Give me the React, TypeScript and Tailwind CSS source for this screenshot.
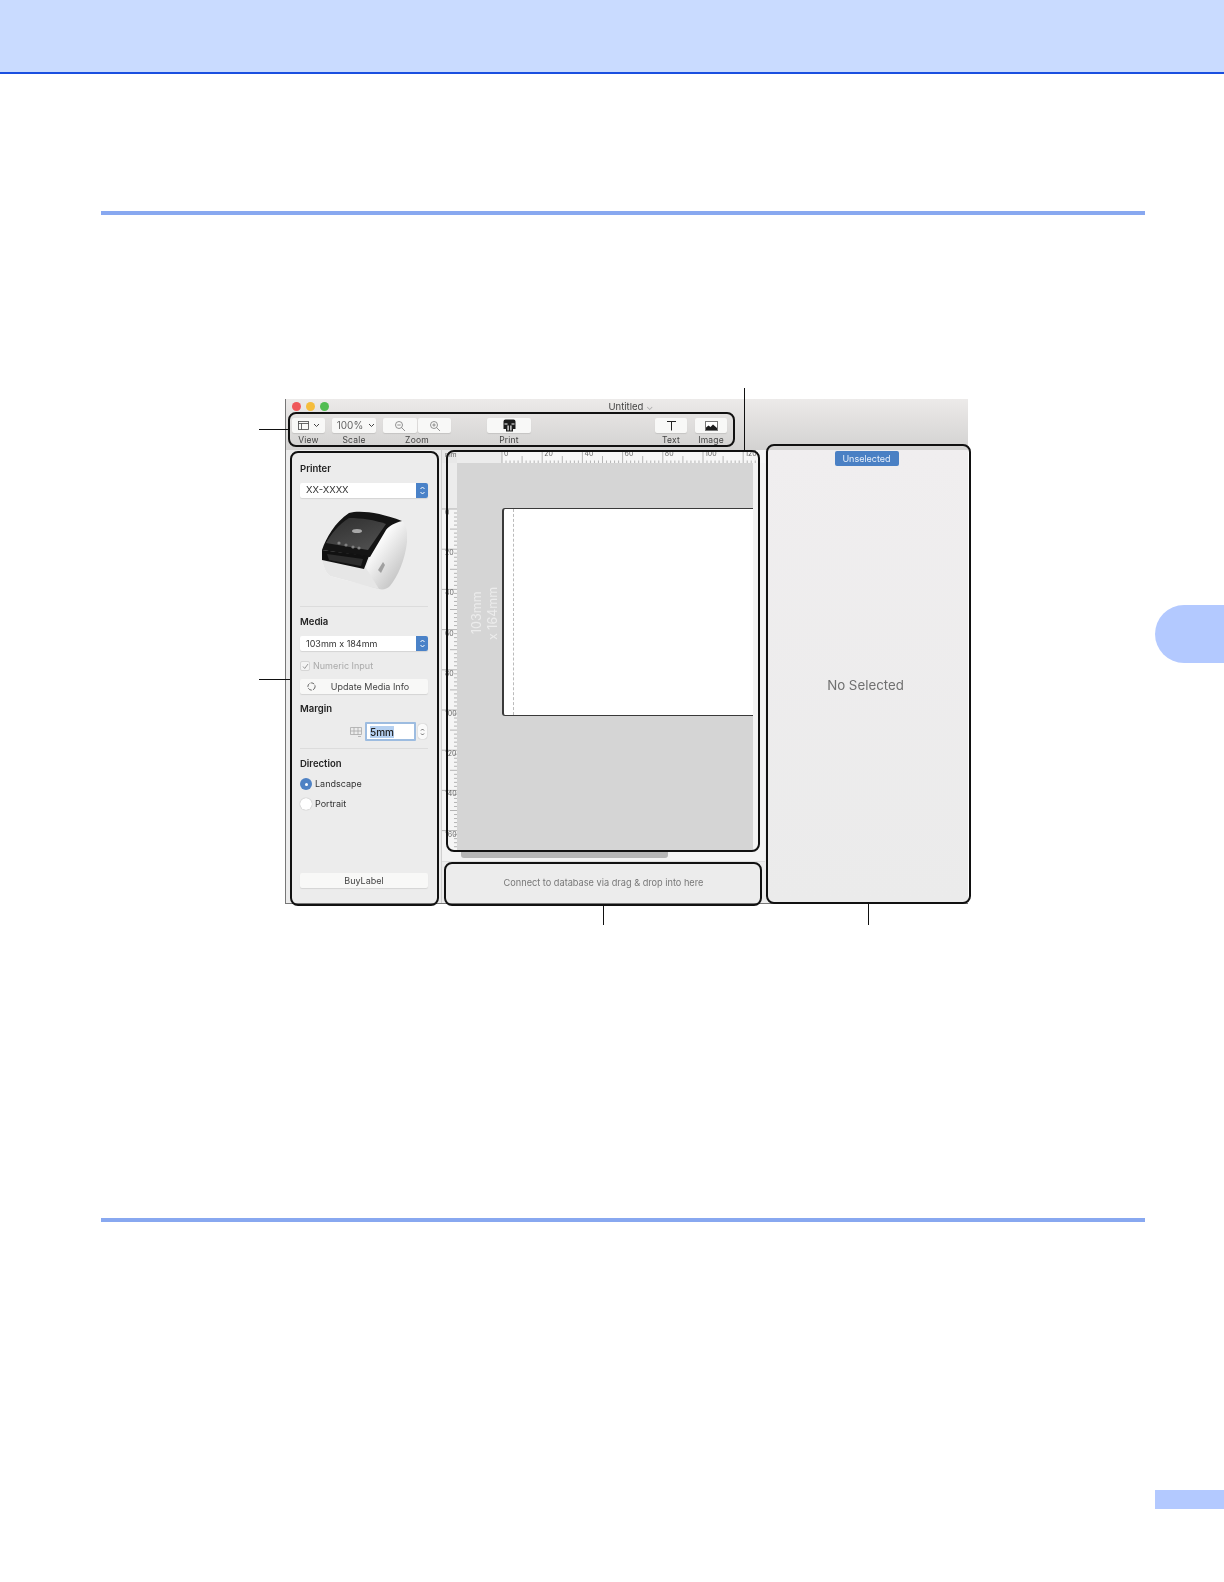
import React from "react";

const font = { fontFamily: '"Inter", "Liberation Sans", sans-serif' };

function Btn({ className = "", children }: { className?: string; children?: React.ReactNode }) {
  return (
    <div className={"h-[15px] bg-[#f8f8f7] rounded-[2px] shadow-[0_1px_1px_rgba(0,0,0,0.1)] flex items-center justify-center text-[#444] " + className}>
      {children}
    </div>
  );
}

function Tool({ label, children }: { label: string; children: React.ReactNode }) {
  return (
    <div className="flex flex-col items-center">
      <div className="flex">{children}</div>
      <div className="mt-[1px] h-[12px] leading-[12px] text-[8.5px] tracking-[0.2px] text-[#444]">{label}</div>
    </div>
  );
}

function Chevron() {
  return (
    <svg width="7" height="5" viewBox="0 0 7 5" fill="none" stroke="#444" strokeWidth="1">
      <path d="M1 1l2.5 2.5L6 1" />
    </svg>
  );
}

function Lens({ plus }: { plus?: boolean }) {
  return (
    <svg width="12" height="12" viewBox="0 0 12 12" fill="none" stroke="#777" strokeWidth="0.8">
      <circle cx="5" cy="5" r="3.5" />
      <path d="M7.6 7.6L11 11M3.3 5h3.4" />
      {plus && <path d="M5 3.3v3.4" />}
    </svg>
  );
}

function SelectBox({ text, narrow }: { text: string; narrow?: boolean }) {
  return (
    <div className="h-[15px] bg-white rounded-[2px] shadow-[0_1px_1px_rgba(0,0,0,0.1)] flex items-center justify-between">
      <span className={"pl-[6px] text-[#333] " + (narrow ? "text-[9px]" : "text-[9.5px]")}>{text}</span>
      <span className="w-[12px] h-[15px] rounded-r-[2px] bg-[#4a82c8] flex items-center justify-center">
        <svg width="7" height="11" viewBox="0 0 7 11" fill="none" stroke="#fff" strokeWidth="1">
          <path d="M1.5 4L3.5 2l2 2M1.5 7l2 2 2-2" />
        </svg>
      </span>
    </div>
  );
}

function SectionLabel({ children }: { children: React.ReactNode }) {
  return <div className="h-[14px] leading-[14px] text-[9.5px] font-semibold text-[#222]">{children}</div>;
}

function PrinterPicture() {
  return (
    <svg width="86" height="80" viewBox="0 0 86 80">
      <defs>
        <linearGradient id="body" x1="0" y1="0" x2="1" y2="0.6">
          <stop offset="0" stopColor="#f4f4f4" />
          <stop offset="0.6" stopColor="#ffffff" />
          <stop offset="1" stopColor="#c9c9c9" />
        </linearGradient>
        <linearGradient id="lid" x1="0" y1="0" x2="0.6" y2="1">
          <stop offset="0" stopColor="#2f2f2f" />
          <stop offset="1" stopColor="#4d4d4d" />
        </linearGradient>
      </defs>
      <path d="M1 50 C3 58 5 63 9 66 L58 79 C62 80 66 79 69 76 C77 66 84 50 86 32 C87 22 85 14 81 11 L65 17 L50 45 L45 58Z" fill="url(#body)" />
      <path d="M1 50 L45 58 L58 79 L9 66 C5 63 3 58 1 50Z" fill="#e6e6e6" />
      <path d="M28 3 C40 0 60 3 81 11 C73 13 68 16 65 20 L49 47 L1 40 C5 28 14 12 28 3Z" fill="#141414" />
      <path d="M28 8 C40 8 54 10 65 14 L47 40 L5 33 C10 24 18 14 28 8Z" fill="url(#lid)" />
      <path d="M1 40 L48 46 L43 59 L1 50Z" fill="#111" />
      <path d="M6 44 L42 49 L40 56 L8 50Z" fill="#2c2c2c" />
      <circle cx="18" cy="33" r="1.6" fill="#808080" />
      <circle cx="25" cy="35" r="1.6" fill="#808080" />
      <circle cx="32" cy="37" r="1.6" fill="#808080" />
      <circle cx="38" cy="38" r="1.6" fill="#808080" />
      <ellipse cx="36" cy="21" rx="5" ry="2" fill="#a8a8a8" />
      <path d="M57 60 L62 52 L64 55 L60 63Z" fill="#a0a0a0" />
    </svg>
  );
}

function TopRuler() {
  const labels = [0, 20, 40, 60, 80, 100, 120];
  const ticks = Array.from({ length: 131 }, (_, i) => i);
  return (
    <svg width="308" height="13" viewBox="0 0 308 13" className="block">
      <rect x="0" y="0" width="45" height="13" fill="#ececec" />
      {ticks.map((i) => {
        const x = 45 + i * 2.01;
        if (x > 302) return null;
        const h = i % 20 === 0 ? 13 : i % 10 === 0 ? 7 : i % 2 === 0 ? 2.5 : 0;
        if (!h) return null;
        return <line key={i} x1={x} x2={x} y1={13 - h} y2={13} stroke="#888" strokeWidth="0.6" />;
      })}
      {labels.map((n) => (
        <text key={n} x={47 + (n / 20) * 40.2} y="6" fontSize="7" fill="#666" style={font}>
          {n}
        </text>
      ))}
    </svg>
  );
}

function LeftRuler() {
  const labels = [0, 20, 40, 60, 80, 100, 120, 140, 160];
  const ticks = Array.from({ length: 172 }, (_, i) => i);
  return (
    <svg width="15" height="387" viewBox="0 0 15 387" className="block">
      <rect x="0" y="0" width="15" height="46" fill="#ececec" />
      {ticks.map((i) => {
        const y = 46 + i * 2.01;
        if (y > 387) return null;
        const h = i % 20 === 0 ? 15 : i % 10 === 0 ? 7 : i % 2 === 0 ? 3 : 0;
        if (!h) return null;
        return <line key={i} x1={15 - h} x2={15} y1={y} y2={y} stroke="#888" strokeWidth="0.6" />;
      })}
      {labels.map((n) => (
        <text key={n} x="3" y={52 + (n / 20) * 40.2} fontSize="7" fill="#666" style={font}>
          {n}
        </text>
      ))}
    </svg>
  );
}

function Sidebar() {
  return (
    <div className="w-[156px] shrink-0 bg-[#ececec] border-r border-[#d0d0d0] pl-[14px] pr-[13px] pt-[12px] pb-[15px] flex flex-col">
      <SectionLabel>Printer</SectionLabel>
      <div className="mt-[7px]">
        <SelectBox text="XX-XXXX" />
      </div>
      <div className="mt-[12px] h-[80px] flex justify-center">
        <PrinterPicture />
      </div>
      <div className="mt-[16px] h-px bg-[#dcdcdc]" />
      <div className="mt-[8px]">
        <SectionLabel>Media</SectionLabel>
      </div>
      <div className="mt-[7px]">
        <SelectBox text="103mm x 184mm" narrow />
      </div>
      <div className="mt-[8px] h-[14px] flex items-center gap-[3px]">
        <span className="w-[10px] h-[10px] bg-[#f4f4f4] border border-[#d6d6d6] rounded-[2px] flex items-center justify-center">
          <svg width="7" height="7" viewBox="0 0 7 7" fill="none" stroke="#999" strokeWidth="1">
            <path d="M1 3.5l1.7 2L6 1" />
          </svg>
        </span>
        <span className="text-[9px] text-[#aaa]">Numeric Input</span>
      </div>
      <Btn className="mt-[6px] relative text-[9px] text-[#333]">
        <svg className="absolute left-[7px] top-[3px]" width="9" height="9" viewBox="0 0 9 9" fill="none" stroke="#555" strokeWidth="0.9" strokeDasharray="4 1.2">
          <circle cx="4.5" cy="4.5" r="3.6" />
        </svg>
        <span className="pl-[12px]">Update Media Info</span>
      </Btn>
      <div className="mt-[8px]">
        <SectionLabel>Margin</SectionLabel>
      </div>
      <div className="mt-[6px] h-[19px] flex items-center justify-end pr-px">
        <svg width="12" height="12" viewBox="0 0 12 12" fill="none" stroke="#aaa" strokeWidth="0.8" className="mr-[3px]">
          <path d="M0.5 1.5h11v7h-11zM4 1.5v7M8 1.5v7M0.5 5h11M8 10.5h3" />
        </svg>
        <div className="w-[51px] h-[19px] bg-white border-[2px] border-[#9dbce0] rounded-[1px] flex items-center pl-[3px]">
          <span className="bg-[#b5d0f0] text-[10px] leading-[12px] font-medium text-[#222]">5mm</span>
        </div>
        <div className="ml-[2px] w-[9px] h-[15px] bg-[#fafafa] rounded-[3px] shadow-[0_0_1px_rgba(0,0,0,0.4)] flex items-center justify-center">
          <svg width="5" height="10" viewBox="0 0 5 10" fill="none" stroke="#444" strokeWidth="0.8">
            <path d="M1 3.5L2.5 2 4 3.5M1 6.5L2.5 8 4 6.5" />
          </svg>
        </div>
      </div>
      <div className="mt-[7px] h-px bg-[#dcdcdc]" />
      <div className="mt-[8px]">
        <SectionLabel>Direction</SectionLabel>
      </div>
      <div className="mt-[6px] h-[14px] flex items-center gap-[3px]">
        <span className="w-[12px] h-[12px] rounded-full bg-[#4f82c4] flex items-center justify-center">
          <span className="w-[3px] h-[3px] rounded-full bg-white" />
        </span>
        <span className="text-[9px] text-[#333]">Landscape</span>
      </div>
      <div className="mt-[6px] h-[14px] flex items-center gap-[3px]">
        <span className="w-[12px] h-[12px] rounded-full bg-white shadow-[0_0_1px_rgba(0,0,0,0.4)]" />
        <span className="text-[9px] text-[#333]">Portrait</span>
      </div>
      <Btn className="mt-auto text-[9px] text-[#333]">BuyLabel</Btn>
    </div>
  );
}

function Center() {
  return (
    <div className="w-[323px] shrink-0 bg-[#f3f3f3] flex flex-col">
      <div className="h-[13px] flex bg-[#f6f6f6]">
        <div className="w-[15px] bg-[#e8e8e8] pl-[3px] overflow-hidden text-[6.5px] leading-[10px] text-[#666]">mm</div>
        <TopRuler />
      </div>
      <div className="flex h-[387px]">
        <div className="w-[15px] bg-[#f5f5f5]">
          <LeftRuler />
        </div>
        <div className="relative w-[296px] bg-[#d5d5d5] pt-[45px] pl-[45px] flex flex-col">
          <div className="h-[208px] bg-white border-l-[2px] border-y border-[#3a3a3a] rounded-l-[3px] pl-[9px]">
            <div className="h-full border-l border-dashed border-[#bbb]" />
          </div>
          <div className="absolute left-[12px] top-[124px] h-[52px] w-[32px] flex flex-col justify-center items-center gap-[2px] [writing-mode:vertical-rl] rotate-180 whitespace-nowrap text-[12.5px] leading-[14px] text-[#ececec]">
            <span>103mm</span>
            <span>x 164mm</span>
          </div>
        </div>
      </div>
      <div className="h-[11px] pl-[19px] pt-[2px]">
        <div className="w-[207px] h-[6px] rounded-b-[3px] bg-[#b6b6b6]" />
      </div>
      <div className="flex-1 bg-[#ececec] border-t border-[#dedede] flex items-center justify-center text-[9.2px] text-[#777]">
        Connect to database via drag &amp; drop into here
      </div>
    </div>
  );
}

function Callout({ className }: { className: string }) {
  return <div className={"absolute border-[2px] border-[#111] rounded-[8px] " + className} />;
}

export default function App() {
  return (
    <div className="relative w-[1224px] h-[1582px] bg-white overflow-hidden" style={font}>
      <div className="h-[74px] bg-[#c9dbff] border-b-[2px] border-[#1a4fe0]" />
      <div className="ml-[101px] mt-[137px] w-[1044px] h-[4px] bg-[#88a8f0]" />

      <div className="ml-[285px] mt-[184px] w-[683px] h-[505px] flex flex-col border-l border-b border-[#777] bg-[#eee] blur-[0.35px]">
        <div className="h-[51px] shrink-0 bg-gradient-to-b from-[#eceae9] to-[#d3d2d1] flex flex-col">
          <div className="h-[19px] pb-[3px] relative flex items-center justify-center">
            <div className="absolute left-[6px] top-[3px] flex gap-[5px]">
              <span className="w-[9px] h-[9px] rounded-full bg-[#f0585a]" />
              <span className="w-[9px] h-[9px] rounded-full bg-[#f5bd3c]" />
              <span className="w-[9px] h-[9px] rounded-full bg-[#52bd52]" />
            </div>
            <span className="text-[9.5px] text-[#444] translate-x-[4px]">
              Untitled <span className="text-[#aaa]">⌄</span>
            </span>
          </div>
          <div className="flex pl-[6px]">
            <Tool label="View">
              <Btn className="w-[33px] gap-[4px]">
                <svg width="11" height="9" viewBox="0 0 11 9" fill="none" stroke="#444" strokeWidth="0.8">
                  <rect x="0.5" y="0.5" width="10" height="8" />
                  <path d="M0.5 2.5h10M3.5 2.5v6" />
                </svg>
                <Chevron />
              </Btn>
            </Tool>
            <div className="ml-[7px]">
              <Tool label="Scale">
                <Btn className="w-[44px] gap-[5px] pl-[4px] text-[10px] text-[#666]">
                  100%
                  <Chevron />
                </Btn>
              </Tool>
            </div>
            <div className="ml-[7px]">
              <Tool label="Zoom">
                <Btn className="w-[34px]">
                  <Lens />
                </Btn>
                <Btn className="w-[33px] ml-px">
                  <Lens plus />
                </Btn>
              </Tool>
            </div>
            <div className="ml-[36px]">
              <Tool label="Print">
                <Btn className="w-[44px]">
                  <svg width="13" height="13" viewBox="0 0 13 13">
                    <path d="M2.5 0.5h8a2 2 0 0 1 2 2v7.5H10v2.5H3V10H0.5V2.5a2 2 0 0 1 2-2z" fill="#1c1c1c" />
                    <path d="M1.5 4.5h3v1h-3zM8.5 4.5h3v1h-3z" fill="#fff" />
                    <path d="M4.5 6.5h1.2v5H4.5zM7.3 6.5h1.2v5H7.3z" fill="#fff" />
                  </svg>
                </Btn>
              </Tool>
            </div>
            <div className="ml-[124px]">
              <Tool label="Text">
                <Btn className="w-[32px]">
                  <svg width="11" height="11" viewBox="0 0 11 11" fill="none" stroke="#222" strokeWidth="1">
                    <path d="M1 1.5h9M5.5 1.5v9" />
                  </svg>
                </Btn>
              </Tool>
            </div>
            <div className="ml-[8px]">
              <Tool label="Image">
                <Btn className="w-[32px]">
                  <svg width="13" height="10" viewBox="0 0 13 10">
                    <rect x="0.5" y="0.5" width="12" height="9" fill="#fff" stroke="#777" />
                    <path d="M1 9V6.5l2.5-2 2 1.5 2.5-2.5 4 3.5V9z" fill="#1c1c1c" />
                  </svg>
                </Btn>
              </Tool>
            </div>
          </div>
        </div>
        <div className="flex-1 flex min-h-0">
          <Sidebar />
          <Center />
          <div className="flex-1 bg-gradient-to-b from-[#f0eeef] to-[#ebebeb] flex flex-col items-center">
            <div className="mt-[1px] w-[64px] h-[15px] rounded-[2px] bg-[#4a80c4] flex items-center justify-center text-[9px] text-[#e6eefa]">
              Unselected
            </div>
            <div className="mt-[209px] mr-[2px] text-[13.3px] leading-[20px] text-[#707070]">No Selected</div>
          </div>
        </div>
      </div>

      <Callout className="left-[288px] top-[412px] w-[447px] h-[35px]" />
      <Callout className="left-[290px] top-[451px] w-[149px] h-[455px]" />
      <Callout className="left-[446px] top-[450px] w-[314px] h-[402px]" />
      <Callout className="left-[444px] top-[862px] w-[318px] h-[44px]" />
      <Callout className="left-[766px] top-[444px] w-[205px] h-[460px]" />
      <div className="absolute left-[259px] top-[429px] w-[29px] h-px bg-[#111]" />
      <div className="absolute left-[259px] top-[679px] w-[31px] h-px bg-[#111]" />
      <div className="absolute left-[744px] top-[388px] w-px h-[62px] bg-[#111]" />
      <div className="absolute left-[603px] top-[905px] w-px h-[20px] bg-[#111]" />
      <div className="absolute left-[868px] top-[904px] w-px h-[21px] bg-[#111]" />

      <div className="absolute left-[101px] top-[1218px] w-[1044px] h-[4px] bg-[#88a8f0]" />
      <div className="absolute left-[1155px] top-[605px] w-[69px] h-[58px] rounded-l-[29px] bg-[#b3c9ff]" />
      <div className="absolute left-[1155px] top-[1490px] w-[69px] h-[19px] bg-[#b3c9ff]" />
    </div>
  );
}
